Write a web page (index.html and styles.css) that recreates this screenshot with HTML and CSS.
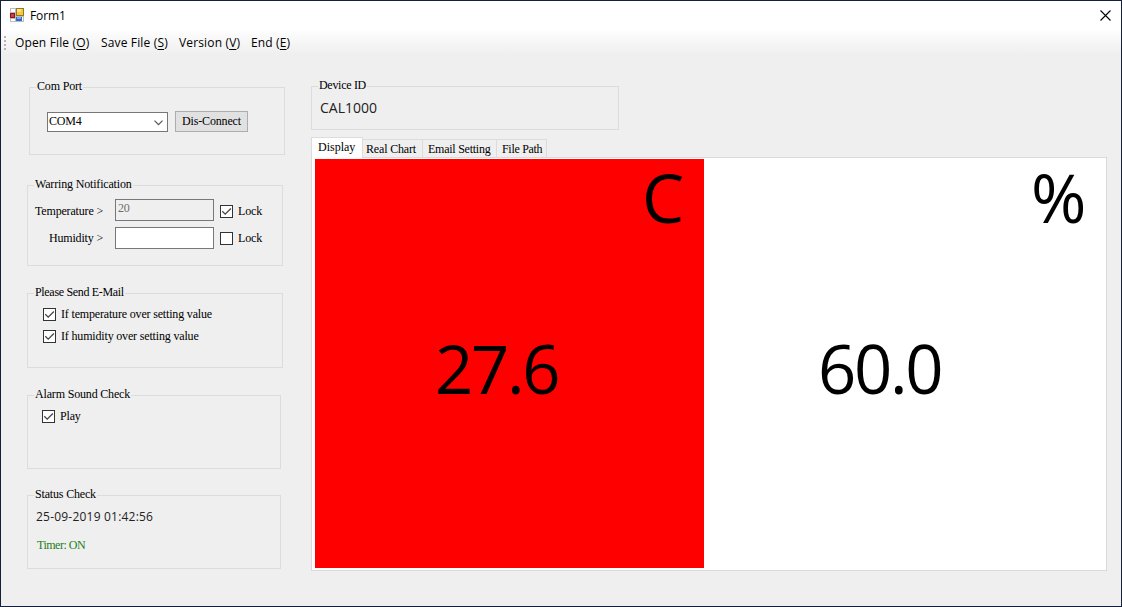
FILE: index.html
```html
<!DOCTYPE html>
<html lang="en">
<head>
<meta charset="utf-8">
<title>Form1</title>
<link rel="stylesheet" href="styles.css">
</head>
<body>
<div class="window">
  <header class="titlebar">
    <svg class="app-icon" width="14" height="14" viewBox="0 0 14 14">
      <path d="M0 0H14V14H0Z" fill="#b9bcc0"/>
      <path d="M1 1H5V4H1ZM1 11H5V13H1ZM12 9H13V13H12Z" fill="#fff"/>
      <rect x="6" y="0" width="8" height="8" fill="#9a7420"/>
      <rect x="7" y="1" width="6" height="6" fill="#f5c83c"/>
      <rect x="7" y="1" width="4" height="3" fill="#ffe38a"/>
      <rect x="0" y="5" width="5" height="5" fill="#8f1515"/>
      <rect x="1" y="6" width="3" height="3" fill="#c8423c"/>
      <rect x="6" y="9" width="6" height="4" fill="#3568c4"/>
      <rect x="7" y="9" width="4" height="2" fill="#79a7ee"/>
    </svg>
    <span class="title">Form1</span>
    <svg class="close" width="11" height="11" viewBox="0 0 11 11"><path d="M.5.5 10.5 10.5M10.5.5.5 10.5" stroke="#000" stroke-width="1.1"/></svg>
  </header>
  <nav class="menu">
    <i class="grip"></i>
    <span class="m-open">Open File (<u>O</u>)</span>
    <span class="m-save">Save File (<u>S</u>)</span>
    <span class="m-version">Version (<u>V</u>)</span>
    <span class="m-end">End (<u>E</u>)</span>
  </nav>
  <main class="content">
    <div class="left">
      <section class="group port">
        <h2 class="legend">Com Port</h2>
        <div class="port-row">
          <div class="combo"><span>COM4</span><svg width="9" height="6" viewBox="0 0 9 6"><path d="M.5.7 4.5 4.7 8.5.7" fill="none" stroke="#555" stroke-width="1.2"/></svg></div>
          <button class="button">Dis-Connect</button>
        </div>
      </section>
      <section class="group warning">
        <h2 class="legend">Warring Notification</h2>
        <div class="limit"><span class="label temp">Temperature &gt;</span><div class="field off">20</div><span class="box"><svg width="11" height="11" viewBox="0 0 11 11"><path d="M1.3 5.3 4.2 8.2 9.9 2.5" fill="none" stroke="#444" stroke-width="1.3"/></svg></span><span class="lock">Lock</span></div>
        <div class="limit"><span class="label hum">Humidity &gt;</span><div class="field low"></div><span class="box"></span><span class="lock">Lock</span></div>
      </section>
      <section class="group email">
        <h2 class="legend">Please Send E-Mail</h2>
        <div class="check"><span class="box"><svg width="11" height="11" viewBox="0 0 11 11"><path d="M1.3 5.3 4.2 8.2 9.9 2.5" fill="none" stroke="#444" stroke-width="1.3"/></svg></span><span class="c-temp">If temperature over setting value</span></div>
        <div class="check"><span class="box"><svg width="11" height="11" viewBox="0 0 11 11"><path d="M1.3 5.3 4.2 8.2 9.9 2.5" fill="none" stroke="#444" stroke-width="1.3"/></svg></span><span class="c-hum">If humidity over setting value</span></div>
      </section>
      <section class="group alarm">
        <h2 class="legend">Alarm Sound Check</h2>
        <div class="check"><span class="box"><svg width="11" height="11" viewBox="0 0 11 11"><path d="M1.3 5.3 4.2 8.2 9.9 2.5" fill="none" stroke="#444" stroke-width="1.3"/></svg></span><span>Play</span></div>
      </section>
      <section class="group status">
        <h2 class="legend">Status Check</h2>
        <div class="clock">25-09-2019 01:42:56</div>
        <div class="timer">Timer: ON</div>
      </section>
    </div>
    <div class="right">
      <section class="group device">
        <h2 class="legend">Device ID</h2>
        <div class="device-id">CAL1000</div>
      </section>
      <div class="tabs">
        <div class="tab active"><span>Display</span></div>
        <div class="tab chart"><span>Real Chart</span></div>
        <div class="tab mail"><span>Email Setting</span></div>
        <div class="tab path"><span>File Path</span></div>
      </div>
      <div class="panel">
        <div class="reading hot"><div class="unit">C</div><div class="value">27.6</div></div>
        <div class="reading damp"><div class="unit">%</div><div class="value">60.0</div></div>
      </div>
    </div>
  </main>
</div>
</body>
</html>
```
FILE: styles.css
```css
* { box-sizing: border-box; }
body { margin: 0; font: 12px/14px "Liberation Serif", serif; letter-spacing: -0.17px; color: #000; }
svg { display: block; }
.window { width: 1122px; height: 607px; border: 1px solid #17203a; background: #efefef; overflow: hidden; }
.titlebar { display: flex; align-items: center; height: 30px; padding: 0 10px 2px 9px; background: #fff; }
.title { margin: 2px 0 0 6px; font: 12px/16px "Open Sans", sans-serif; letter-spacing: -0.1px; flex: 1; }
.menu { display: flex; align-items: center; height: 23px; padding-left: 3px; background: linear-gradient(#fdfdfd, #efefef); font: 12px/16px "Open Sans", sans-serif; letter-spacing: 0.15px; white-space: nowrap; }
.menu u { text-underline-offset: 2px; }
.grip { width: 2px; height: 14px; background: repeating-linear-gradient(#b4b4b4 0 2px, transparent 2px 4px); }
.m-open { width: 86px; margin-left: 9px; }
.m-save { width: 78px; }
.m-version { width: 72px; }
.content { display: flex; height: 551px; white-space: nowrap; }
.left { width: 310px; padding: 33px 0 0 26px; }
.right { width: 796px; padding-top: 32px; }
.group { border: 1px solid #dcdcdc; }
.legend { width: max-content; height: 14px; margin: -9px 0 1px 6px; padding: 0 1px; background: #efefef; font: inherit; }
.port { width: 256px; height: 68px; margin-left: 2px; }
.port-row { display: flex; padding: 17px 0 0 17px; gap: 7px; }
.combo { display: flex; justify-content: space-between; align-items: center; width: 121px; height: 20px; margin-top: 1px; padding: 0 4px 2px 1px; border: 1px solid #777; background: #fff; }
.combo svg { position: relative; top: 2px; }
.button { width: 73px; height: 21px; padding: 0 0 1px; border: 1px solid #adadad; background: #e1e1e1; font: inherit; letter-spacing: -0.17px; }
.warning { width: 256px; height: 81px; margin-top: 30px; }
.warning .legend { margin-bottom: 8px; }
.limit { display: flex; align-items: center; height: 22px; margin-bottom: 5px; }
.label { width: 75px; margin: 2px 12px 0 0; text-align: right; }
.field { width: 99px; height: 22px; margin-right: 6px; padding: 1px 2px; border: 1px solid #777; background: #fff; }
.field.low { margin-top: 2px; }
.field.off { background: #efefef; color: #6d6d6d; }
.box { flex: none; width: 13px; height: 13px; border: 1px solid #333; background: #fff; }
.limit .box { margin-top: 2px; }
.lock { margin: 2px 0 0 5px; }
.email { width: 256px; height: 75px; margin-top: 27px; }
.email .legend { margin-bottom: 5px; letter-spacing: -0.32px; }
.check { display: flex; align-items: center; gap: 5px; height: 22px; padding-left: 15px; }
.check > span:last-child { margin-top: -2px; }
.check .box { margin-top: -1px; }
.alarm { width: 254px; height: 74px; margin-top: 27px; }
.alarm .legend { margin-bottom: 5px; }
.alarm .check { padding-left: 14px; }
.status { width: 254px; height: 74px; margin-top: 26px; }
.clock { margin: 8px 0 0 8px; font: 12px/16px "Open Sans", sans-serif; letter-spacing: 0.21px; color: #222; }
.timer { margin: 13px 0 0 9px; color: #208020; letter-spacing: -0.5px; }
.device { width: 308px; height: 44px; }
.device .legend { letter-spacing: -0.3px; }
.device-id { margin: 7px 0 0 8px; font: 14px/18px "Open Sans", sans-serif; letter-spacing: 0; color: #222; }
.tabs { display: flex; align-items: flex-end; height: 27px; padding-top: 7px; }
.tab { height: 18px; padding: 2px 0 0 4px; border: solid #dcdcdc; border-width: 1px 1px 0 0; }
.tab.active { position: relative; width: 52px; height: 21px; margin-bottom: -1px; padding: 2px 0 0 6px; border-left-width: 1px; background: #fff; letter-spacing: 0; }
.tab.chart { width: 60px; padding-left: 3px; }
.tab.mail { width: 74px; padding-left: 5px; letter-spacing: -0.25px; }
.tab.path { width: 50px; padding-left: 5px; letter-spacing: -0.3px; }
.panel { display: flex; width: 796px; height: 414px; padding: 1px 3px; border: 1px solid #d9d9d9; background: #fff; }
.reading { width: 389px; height: 409px; font: 67px/84px "Open Sans", sans-serif; letter-spacing: -2.3px; }
.hot { background: #f00; }
.unit { height: 80px; margin-top: -4px; padding-right: 22px; text-align: right; }
.damp .unit { padding-right: 9px; }
.value { margin-top: 91px; padding-left: 120px; }
.damp .value { padding-left: 114px; }
.hot .unit { width: 389px; }
```
